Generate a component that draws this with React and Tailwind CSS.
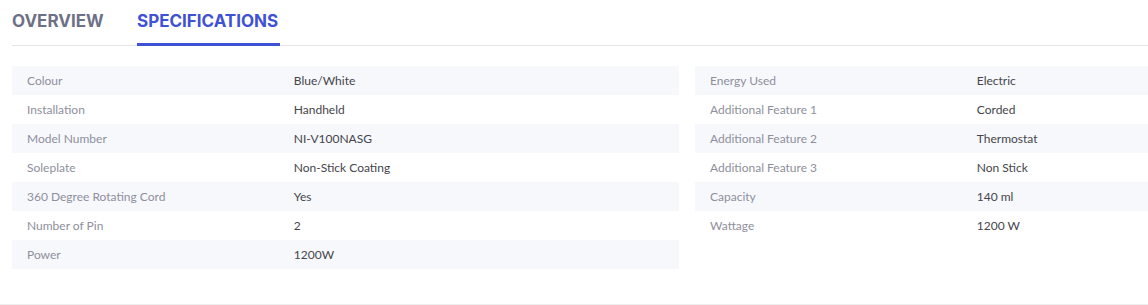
const left = [
  ['Colour', 'Blue/White'],
  ['Installation', 'Handheld'],
  ['Model Number', 'NI-V100NASG'],
  ['Soleplate', 'Non-Stick Coating'],
  ['360 Degree Rotating Cord', 'Yes'],
  ['Number of Pin', '2'],
  ['Power', '1200W'],
];

const right = [
  ['Energy Used', 'Electric'],
  ['Additional Feature 1', 'Corded'],
  ['Additional Feature 2', 'Thermostat'],
  ['Additional Feature 3', 'Non Stick'],
  ['Capacity', '140 ml'],
  ['Wattage', '1200 W'],
];

function SpecTable({ rows }) {
  return (
    <div className="w-[667px] shrink-0">
      {rows.map(([label, value], i) => (
        <div key={label} className={`flex h-[29px] items-center text-[12px] ${i % 2 === 0 ? 'bg-[#f7f8fc]' : ''}`}>
          <div className="w-[40%] pl-[15px] text-[#8e8f9c]">{label}</div>
          <div className="pl-[15px] text-[#45454b]">{value}</div>
        </div>
      ))}
    </div>
  );
}

export default function App() {
  return (
    <div className="w-full overflow-hidden bg-white border-b border-[#eeeeee] pb-[35px]" style={{ fontFamily: 'Lato, "Open Sans", sans-serif' }}>
      <div className="ml-3 flex h-[46px] items-start border-b border-[#e5e5e5]" style={{ fontFamily: 'Inter, Lato, sans-serif' }}>
        <div className="w-[125px] shrink-0 pt-[10px] text-[17px] leading-[22px] font-bold text-[#6e7087]">OVERVIEW</div>
        <div className="h-[46px] w-[143px] shrink-0 whitespace-nowrap pt-[10px] text-[17px] leading-[22px] font-bold text-[#3f51d5] border-b-[3px] border-[#3f51d5]">SPECIFICATIONS</div>
      </div>
      <div className="ml-3 mt-5 flex gap-4 items-start">
        <SpecTable rows={left} />
        <SpecTable rows={right} />
      </div>
    </div>
  );
}
